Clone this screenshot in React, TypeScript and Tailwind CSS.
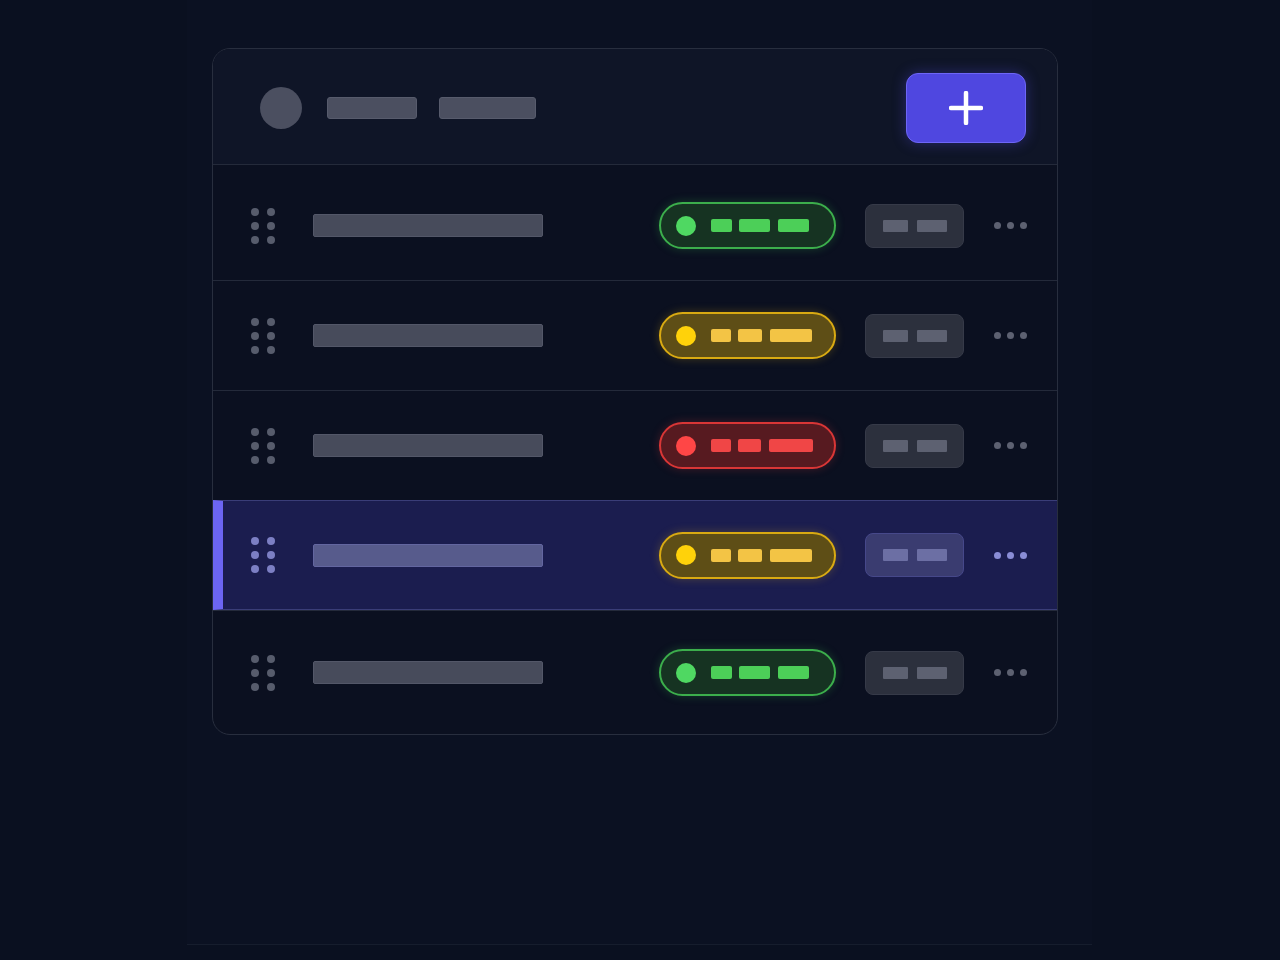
import React from "react";

type Tone = "green" | "yellow" | "red";

interface IRow {
    tone: Tone;
    selected?: boolean;
    height: string;
}

const rows: IRow[] = [
    { tone: "green", height: "h-[116px] pt-[6px]" },
    { tone: "yellow", height: "h-[110px]" },
    { tone: "red", height: "h-[110px]" },
    { tone: "yellow", height: "h-[110px]", selected: true },
    { tone: "green", height: "h-[124px]" },
];

const pillStyles: Record<Tone, { pill: string; dot: string; bar: string; widths: string[] }> = {
    green: {
        pill: "bg-[#163322] border-[#3cae4c] shadow-[0_0_10px_rgba(60,200,80,0.25)]",
        dot: "bg-[#4fd862]",
        bar: "bg-[#4ccf58]",
        widths: ["w-[21px]", "w-[31px]", "w-[31px]"],
    },
    yellow: {
        pill: "bg-[#5e4e16] border-[#d9aa12] shadow-[0_0_10px_rgba(230,180,20,0.25)]",
        dot: "bg-[#ffd20a]",
        bar: "bg-[#f3c445]",
        widths: ["w-[20px]", "w-[24px]", "w-[42px]"],
    },
    red: {
        pill: "bg-[#571a20] border-[#d93636] shadow-[0_0_10px_rgba(230,60,60,0.25)]",
        dot: "bg-[#ff4646]",
        bar: "bg-[#f04646]",
        widths: ["w-[20px]", "w-[23px]", "w-[44px]"],
    },
};

const StatusPill = ({ tone }: { tone: Tone }) => {
    const s = pillStyles[tone];
    return (
        <div className={`w-[177px] h-[47px] rounded-full border-2 flex items-center pl-[15px] ${s.pill}`}>
            <span className={`w-[20px] h-[20px] rounded-full ${s.dot}`} />
            <span className={`ml-[15px] h-[13px] rounded-[2px] ${s.bar} ${s.widths[0]}`} />
            <span className={`ml-[7px] h-[13px] rounded-[2px] ${s.bar} ${s.widths[1]}`} />
            <span className={`ml-[8px] h-[13px] rounded-[2px] ${s.bar} ${s.widths[2]}`} />
        </div>
    );
};

const Grip = ({ selected }: { selected?: boolean }) => (
    <div className="grid grid-cols-2 gap-x-[8px] gap-y-[6px] w-[24px]">
        {Array.from({ length: 6 }).map((_, i) => (
            <span key={i} className={`w-[8px] h-[8px] rounded-full ${selected ? "bg-[#7c7fc4]" : "bg-[#575c6c]"}`} />
        ))}
    </div>
);

const Row = ({ row }: { row: IRow }) => (
    <div
        className={`flex items-center border-t ${row.height} ${
            row.selected
                ? "bg-[#1b1d4f] border-[#3a3d78] border-b border-b-[#3a3d78] border-l-[10px] border-l-[#6c65f2] pl-[28px]"
                : "border-[#242a3a] pl-[38px]"
        } pr-[30px]`}
    >
        <Grip selected={row.selected} />
        <div
            className={`ml-[38px] w-[230px] h-[23px] rounded-[2px] border ${
                row.selected ? "bg-[#575b8c] border-[#6366a0]" : "bg-[#474b5b] border-[#535768]"
            }`}
        />
        <div className="flex-1" />
        <StatusPill tone={row.tone} />
        <div
            className={`ml-[29px] w-[99px] h-[44px] rounded-[8px] border flex items-center pl-[17px] gap-[9px] ${
                row.selected ? "bg-[#3a3c70] border-[#46488a]" : "bg-[#2c303d] border-[#363a48]"
            }`}
        >
            <span className={`w-[25px] h-[12px] rounded-[1px] ${row.selected ? "bg-[#6c6fa4]" : "bg-[#5d6171]"}`} />
            <span className={`w-[30px] h-[12px] rounded-[1px] ${row.selected ? "bg-[#6c6fa4]" : "bg-[#5d6171]"}`} />
        </div>
        <div className="ml-[30px] flex items-center gap-[6px]">
            {[0, 1, 2].map((i) => (
                <span key={i} className={`w-[7px] h-[7px] rounded-full ${row.selected ? "bg-[#8a8dd6]" : "bg-[#5d6171]"}`} />
            ))}
        </div>
    </div>
);

const App = () => {
    return (
        <div className="w-full h-[960px] bg-[#0a1020] overflow-hidden">
            <div className="ml-[187px] w-[905px] h-[945px] bg-[#0b1122] border-b border-[#161d2d] pt-[48px] pl-[25px]">
                <div className="w-[846px] rounded-[18px] border border-[#282e3e] bg-[#0b1020] overflow-hidden">
                    <div className="h-[115px] pt-[3px] bg-[#0f1527] flex items-center pl-[47px] pr-[31px]">
                        <span className="w-[42px] h-[42px] rounded-full bg-[#4b4f60]" />
                        <span className="ml-[25px] w-[90px] h-[22px] rounded-[3px] bg-[#4b4f60] border border-[#575b6c]" />
                        <span className="ml-[22px] w-[97px] h-[22px] rounded-[3px] bg-[#4b4f60] border border-[#575b6c]" />
                        <div className="flex-1" />
                        <button className="w-[120px] h-[70px] rounded-[12px] bg-[#4f47e0] border border-[#6e66f7] shadow-[0_0_14px_rgba(90,80,240,0.35)] flex items-center justify-center">
                            <svg width="34" height="34" viewBox="0 0 34 34">
                                <path d="M17 2v30M2 17h30" stroke="#ffffff" strokeWidth="4.5" strokeLinecap="round" />
                            </svg>
                        </button>
                    </div>
                    {rows.map((row, index) => (
                        <Row key={index} row={row} />
                    ))}
                </div>
            </div>
        </div>
    );
};

export default App;
